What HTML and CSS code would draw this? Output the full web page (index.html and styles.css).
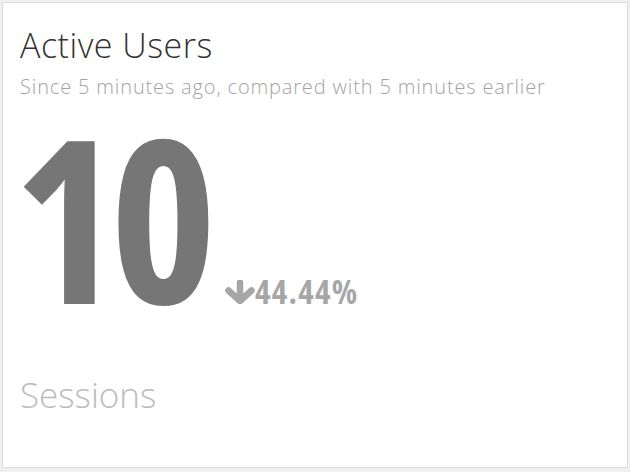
FILE: index.html
```html
<!DOCTYPE html>
<html lang="en">
<head>
<meta charset="utf-8">
<title>Active Users</title>
<link rel="stylesheet" href="styles.css">
</head>
<body>
<div class="card">
  <h1 class="title">Active Users</h1>
  <p class="subtitle">Since 5 minutes ago, compared with 5 minutes earlier</p>
  <div class="metric">
    <span class="value">10</span>
    <span class="delta">
      <svg class="arrow" viewBox="0 0 30 24" width="30" height="24" aria-hidden="true">
        <path d="M15 2.5 V19 M3.5 10.5 L15 21 L26.5 10.5" fill="none" stroke="currentColor" stroke-width="6.5" stroke-linecap="round" stroke-linejoin="round"/>
      </svg>44.44%
    </span>
  </div>
  <h2 class="next">Sessions</h2>
</div>
</body>
</html>
```
FILE: styles.css
```css
html, body {
  height: 100%;
}
body {
  margin: 0;
  box-sizing: border-box;
  padding: 2px 2px 4px 2px;
  background: #f0f0f0;
  display: flex;
  font-family: "Open Sans", "Liberation Sans", sans-serif;
}
.card {
  flex: 1;
  background: #fff;
  border: 1px solid #dcdcdc;
  padding: 24px 17px 0 17px;
}
.title {
  margin: 0;
  font-size: 34px;
  line-height: 36px;
  font-weight: 300;
  letter-spacing: 0.5px;
  color: #333;
}
.subtitle {
  margin: 13px 0 0 0;
  font-size: 20px;
  line-height: 22px;
  font-weight: 300;
  letter-spacing: 0.85px;
  color: #a3a3a3;
}
.metric {
  margin-top: 2px;
  display: flex;
  align-items: baseline;
}
.value {
  margin-left: -7px;
  font-size: 228px;
  line-height: 231px;
  font-weight: 700;
  font-stretch: 75%;
  color: #767676;
  letter-spacing: -10px;
}
.delta {
  margin-left: 18px;
  display: inline-flex;
  align-items: baseline;
  font-size: 33px;
  line-height: 36px;
  font-weight: 700;
  font-stretch: 82%;
  letter-spacing: 1.3px;
  color: #a6a6a6;
}
.arrow {
  margin-right: 0;
  align-self: flex-end;
  margin-bottom: 6px;
}
.next {
  margin: 44px 0 0 0;
  font-size: 35px;
  line-height: 40px;
  font-weight: 300;
  color: #bcbcbc;
}
```
